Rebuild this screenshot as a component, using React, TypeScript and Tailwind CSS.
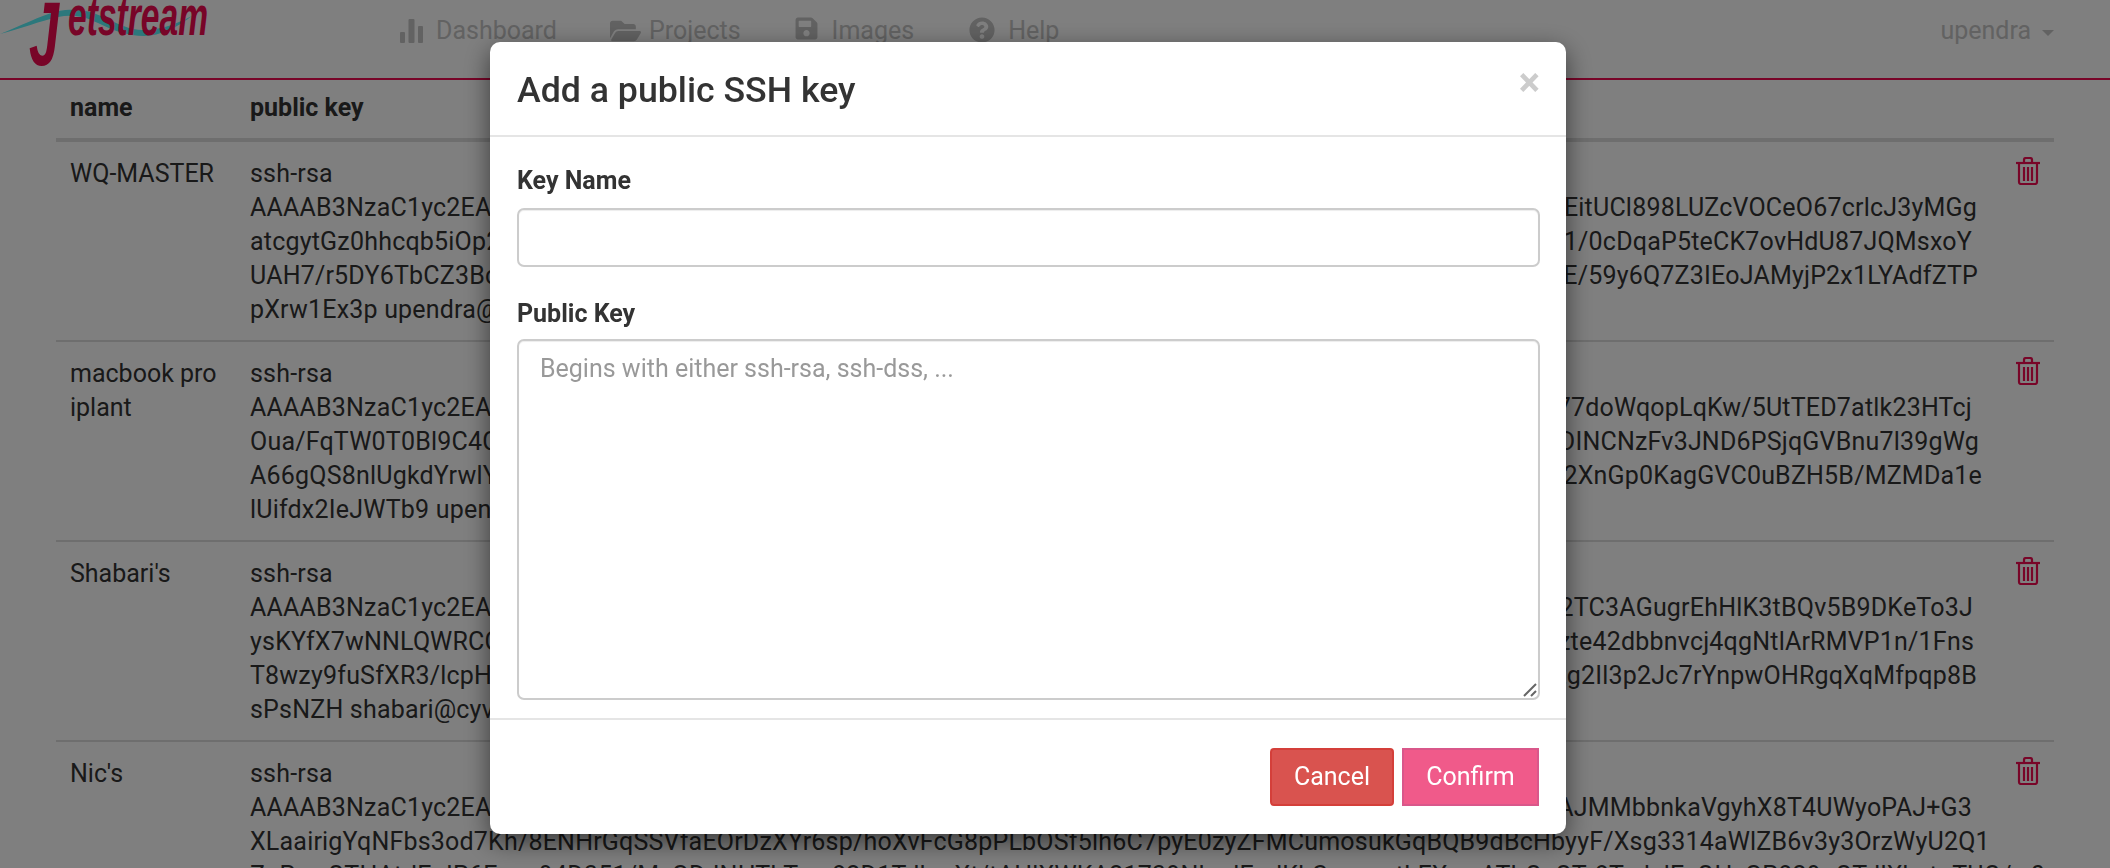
import { FaFolderOpen, FaQuestionCircle, FaSave } from "react-icons/fa";

const rows = [
  {
    name: "WQ-MASTER",
    lines: [
      { left: "ssh-rsa" },
      { left: "AAAAB3NzaC1yc2EAAAAD", right: "EitUCl898LUZcVOCeO67crlcJ3yMGg", width: "w-[1727px]" },
      { left: "atcgytGz0hhcqb5iOp2xY", right: "1/0cDqaP5teCK7ovHdU87JQMsxoY", width: "w-[1722px]" },
      { left: "UAH7/r5DY6TbCZ3BcQz", right: "E/59y6Q7Z3IEoJAMyjP2x1LYAdfZTP", width: "w-[1728px]" },
      { left: "pXrw1Ex3p upendra@cyverse" },
    ],
  },
  {
    name: "macbook pro iplant",
    lines: [
      { left: "ssh-rsa" },
      { left: "AAAAB3NzaC1yc2EAAAAD", right: "77doWqopLqKw/5UtTED7atlk23HTcj", width: "w-[1722px]" },
      { left: "Oua/FqTW0T0Bl9C4CxRt", right: "DINCNzFv3JND6PSjqGVBnu7l39gWg", width: "w-[1729px]" },
      { left: "A66gQS8nlUgkdYrwlYpm", right: "2XnGp0KagGVC0uBZH5B/MZMDa1e", width: "w-[1732px]" },
      { left: "lUifdx2IeJWTb9 upendra@cyverse" },
    ],
  },
  {
    name: "Shabari's",
    lines: [
      { left: "ssh-rsa" },
      { left: "AAAAB3NzaC1yc2EAAAAD", right: "2TC3AGugrEhHlK3tBQv5B9DKeTo3J", width: "w-[1723px]" },
      { left: "ysKYfX7wNNLQWRCCgTb", right: "zte42dbbnvcj4qgNtlArRMVP1n/1Fns", width: "w-[1724px]" },
      { left: "T8wzy9fuSfXR3/lcpHvKe", right: "tg2Il3p2Jc7rYnpwOHRgqXqMfpqp8B", width: "w-[1727px]" },
      { left: "sPsNZH shabari@cyverse" },
    ],
  },
  {
    name: "Nic's",
    lines: [
      { left: "ssh-rsa" },
      { left: "AAAAB3NzaC1yc2EAAAAD", right: "AJMMbbnkaVgyhX8T4UWyoPAJ+G3", width: "w-[1722px]" },
      {
        left: "XLaairigYqNFbs3od7Kh/8ENHrGqSSVfaEOrDzXYr6sp/hoXvFcG8pPLbOSf5lh6C7pyE0zyZFMCumosukGqBQB9dBcHbyyF/Xsg3314aWlZB6v3y3OrzWyU2Q1",
      },
      {
        left: "ZoPcwQTHAtrlEqIP6Ezqq94D351/MzGDJNHTkTzrc82D1TdlpoXt/tAHlXWKA21739NluqlEqdKbSvarwqtLFXwnATbQzQTr8TzdalEzQHzGP829gQTdlXhstgTUQ/w0u",
      },
    ],
  },
];

function BarsIcon() {
  return (
    <svg viewBox="0 0 23 24" className="w-[23px] h-[24px] fill-[#c4c4c4]">
      <rect x="0" y="13" width="5" height="11" rx="1" />
      <rect x="8.5" y="0" width="6" height="24" rx="1" />
      <rect x="18" y="7" width="5" height="17" rx="1" />
    </svg>
  );
}

function TrashIcon() {
  return (
    <svg viewBox="0 0 24 28" className="w-[24px] h-[28px] fill-none stroke-[#f00a50] stroke-[2.2]">
      <path d="M0 6h24" />
      <path d="M8 5V2.500C8 1.500 9 1 10 1h4c1 0 2 .5 2 1.500V5" />
      <path d="M3 7v18c0 1.200.8 2 2 2h14c1.200 0 2-.8 2-2V7" />
      <path d="M8 10v14M12 10v14M16 10v14" />
    </svg>
  );
}

function Logo() {
  return (
    <div className="relative w-[400px] h-[78px] shrink-0 overflow-hidden">
      <svg viewBox="0 0 210 40" className="absolute left-0 top-0 w-[210px] h-[40px]">
        <path
          d="M0 34C20 26 40 16 58 11C75 8 88 10 104 17C120 25 132 31 146 30C165 29 180 22 192 16C178 27 160 36 144 36C128 36 112 30 98 23C84 16 72 14 58 17C40 21 20 29 0 34Z"
          className="fill-[#58f0f8]"
        />
      </svg>
      <span className="absolute left-[29px] top-[-11px] text-[90px] leading-[90px] font-bold italic font-['Liberation_Sans',sans-serif] text-[#f00a50] origin-left scale-x-[0.6]">
        J
      </span>
      <span className="absolute left-[68px] top-[-14px] text-[56px] leading-[60px] font-bold italic font-['Liberation_Sans',sans-serif] text-[#f00a50] origin-left scale-x-[0.6]">
        etstream
      </span>
    </div>
  );
}

function Nav() {
  return (
    <nav className="flex h-[80px] border-b-2 border-[#f00a50] pr-[56px] text-[#c4c4c4] text-[25px] leading-[34px]">
      <Logo />
      <div className="flex flex-1 items-start pt-[14px]">
        <a className="flex items-center gap-[13px]">
          <BarsIcon />
          Dashboard
        </a>
        <a className="flex items-center gap-[8px] ml-[53px]">
          <FaFolderOpen className="w-[31px] h-[28px]" />
          Projects
        </a>
        <a className="flex items-center gap-[14px] ml-[54px]">
          <FaSave className="w-[23px] h-[25px] -mt-[6px]" />
          Images
        </a>
        <a className="flex items-center gap-[13px] ml-[55px]">
          <FaQuestionCircle className="w-[26px] h-[26px] -mt-[2px]" />
          Help
        </a>
        <a className="flex items-center gap-[11px] ml-auto">
          upendra
          <span className="border-x-[6px] border-x-transparent border-t-[6px] border-t-[#c4c4c4] mt-[4px]" />
        </a>
      </div>
    </nav>
  );
}

function KeyTable() {
  return (
    <div className="mx-[56px] text-[#333] text-[25px] leading-[34px]">
      <div className="flex h-[62px] border-b-4 border-[#ddd] font-bold pt-[11px]">
        <div className="w-[194px] pl-[14px]">name</div>
        <div>public key</div>
      </div>
      {rows.map((row) => (
        <div key={row.name} className="flex h-[200px] border-b-2 border-[#ddd] pt-[15px] overflow-hidden">
          <div className="w-[194px] shrink-0 pl-[14px] pr-[14px]">{row.name}</div>
          <div className="flex-1 min-w-0 tracking-[0.2px]">
            {row.lines.map((line) => (
              <div key={line.left} className={`flex justify-between whitespace-nowrap ${line.width ?? ""}`}>
                <span>{line.left}</span>
                {line.right && <span>{line.right}</span>}
              </div>
            ))}
          </div>
          <div className="w-[38px] shrink-0">
            <TrashIcon />
          </div>
        </div>
      ))}
    </div>
  );
}

function SshKeyModal() {
  return (
    <div className="fixed inset-0 bg-black/50 flex justify-center items-start pt-[42px] pr-[54px]">
      <div className="w-[1076px] h-[792px] bg-white rounded-[10px] text-[#333] shadow-[0_8px_26px_rgba(0,0,0,0.55)] flex flex-col">
        <div className="h-[95px] shrink-0 border-b-2 border-[#e5e5e5] flex items-start justify-between pl-[27px] pr-[26px]">
          <h4 className="text-[35.700px] leading-[44px] font-medium mt-[26px]">Add a public SSH key</h4>
          <button className="text-[40px] leading-[36px] font-bold text-[#ccc] mt-[23px]">×</button>
        </div>
        <div className="flex-1 flex flex-col pl-[27px] pr-[26px] pt-[27px] pb-[18px]">
          <label className="text-[25px] leading-[34px] font-bold mb-[10px]">Key Name</label>
          <input className="h-[59px] shrink-0 border-2 border-[#ccc] rounded-[7px] px-[21px] text-[25px] outline-none shadow-[inset_0_1px_1px_rgba(0,0,0,0.075)]" />
          <label className="text-[25px] leading-[34px] font-bold mt-[30px] mb-[8px]">Public Key</label>
          <div className="relative flex-1 flex">
            <textarea
              placeholder="Begins with either ssh-rsa, ssh-dss, ..."
              className="flex-1 resize-none border-2 border-[#ccc] rounded-[7px] px-[21px] py-[11px] text-[25px] leading-[34px] outline-none placeholder:text-[#999] shadow-[inset_0_1px_1px_rgba(0,0,0,0.075)]"
            />
            <svg viewBox="0 0 14 14" className="absolute right-[3px] bottom-[3px] w-[14px] h-[14px] fill-none stroke-[#666] stroke-2">
              <path d="M1 13L13 1M8 13L13 8" />
            </svg>
          </div>
        </div>
        <div className="h-[116px] shrink-0 border-t-2 border-[#e5e5e5] flex items-start justify-end gap-[8px] pt-[28px] pr-[27px]">
          <button className="w-[124px] h-[58px] bg-[#d9534f] border-2 border-[#d43f3a] rounded-[4px] text-white text-[25px]">
            Cancel
          </button>
          <button className="w-[137px] h-[58px] bg-[#f05a8a] border-2 border-[#d9578a] text-white text-[25px]">
            Confirm
          </button>
        </div>
      </div>
    </div>
  );
}

export default function App() {
  return (
    <div className="h-screen overflow-hidden bg-white font-['Roboto',sans-serif]">
      <Nav />
      <KeyTable />
      <SshKeyModal />
    </div>
  );
}
